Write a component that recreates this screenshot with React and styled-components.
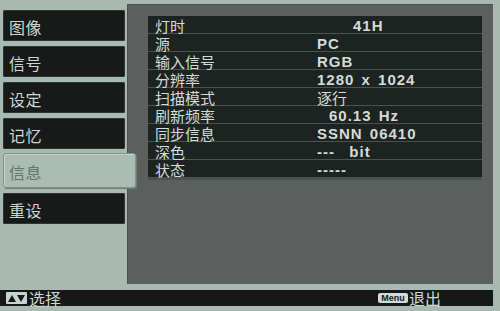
import React from "react";
import styled, { createGlobalStyle } from "styled-components";

const Global = createGlobalStyle`
  html, body { margin: 0; padding: 0; }
  body { background: #a7b9b1; }
  #root { width: 500px; height: 311px; overflow: hidden; }
`;

const cjk = `"Noto Sans CJK SC", "Noto Sans", sans-serif`;

const Screen = styled.div`
  width: 500px;
  height: 311px;
  background: #a7b9b1;
  display: flex;
  flex-direction: column;
  font-family: ${cjk};
`;

const Main = styled.div`
  display: flex;
  padding: 4px 7px 0 3px;
  height: 280px;
`;

const Sidebar = styled.div`
  width: 124px;
  display: flex;
  flex-direction: column;
  gap: 5px;
  padding-top: 6px;
  position: relative;
  z-index: 1;
`;

const MenuItem = styled.div`
  box-sizing: border-box;
  height: ${(p) => (p.$active ? 35 : 31)}px;
  width: ${(p) => (p.$active ? 133 : 122)}px;
  margin-top: ${(p) => (p.$active ? -1 : 0)}px;
  background: ${(p) => (p.$active ? "#aabdb4" : "#171a18")};
  border: 1px solid ${(p) => (p.$active ? "#84938c" : "#2f3532")};
  border-radius: ${(p) => (p.$active ? 3 : 1)}px;
  box-shadow: ${(p) =>
    p.$active ? "1px 1px 0 #6f7d77, inset 1px 1px 0 #c2d2ca" : "none"};
  color: ${(p) => (p.$active ? "#66746e" : "#cdd8d2")};
  font-size: 16px;
  display: flex;
  align-items: center;
  padding: 2px 0 0 5px;
  letter-spacing: 0.5px;
`;

const Panel = styled.div`
  flex: 1;
  margin-left: 0;
  background: #5b5f5d;
  padding: 12px 11px 0 21px;
  box-shadow: inset 1px 1px 0 #4a4e4c;
`;

const Table = styled.div`
  display: flex;
  flex-direction: column;
  gap: 1px;
  background: #4b5350;
  padding-bottom: 3px;
  padding-top: 0;
`;

const Row = styled.div`
  display: grid;
  grid-template-columns: 169px 1fr;
  height: 17px;
  background: #1d2321;
  align-items: center;
  color: #d4dcd8;
`;

const Label = styled.div`
  font-family: ${cjk};
  font-size: 15px;
  padding-left: 7px;
  line-height: 17px;
  padding-top: 1px;
`;

const Value = styled.div`
  font-family: "Liberation Sans", ${cjk};
  font-weight: bold;
  font-size: 15px;
  letter-spacing: 1px;
  word-spacing: 2px;
  line-height: 17px;
  padding-left: ${(p) => p.$indent || 0}px;
  padding-top: 1px;
  white-space: pre;
`;

const CjkValue = styled(Value)`
  font-family: ${cjk};
  font-weight: normal;
  letter-spacing: 0;
`;

const Footer = styled.div`
  margin-top: 6px;
  height: 16px;
  margin-right: 7px;
  background: #151816;
  display: flex;
  align-items: center;
  color: #cdd8d2;
  font-size: 16px;
`;

const ArrowKey = styled.span`
  display: inline-flex;
  align-items: center;
  justify-content: center;
  gap: 1px;
  width: 21px;
  height: 12px;
  margin-left: 6px;
  margin-right: 2px;
  background: #c9d4cf;
  border-radius: 1px;
`;

const MenuKey = styled.span`
  display: inline-flex;
  align-items: center;
  justify-content: center;
  height: 10px;
  width: 30px;
  margin-left: auto;
  margin-right: 1px;
  background: #d2dcd7;
  color: #151816;
  border-radius: 2px;
  font-family: "Liberation Sans", sans-serif;
  font-size: 9px;
  font-weight: bold;
`;

const FootText = styled.span`
  line-height: 16px;
`;

const ExitText = styled(FootText)`
  margin-right: 52px;
`;

const rows = [
  ["灯时", "41H", 36, false],
  ["源", "PC", 0, false],
  ["输入信号", "RGB", 0, false],
  ["分辨率", "1280 x 1024", 0, false],
  ["扫描模式", "逐行", 0, true],
  ["刷新频率", "60.13 Hz", 12, false],
  ["同步信息", "SSNN 06410", 0, false],
  ["深色", "---  bit", 0, false],
  ["状态", "-----", 0, false],
];

const menu = ["图像", "信号", "设定", "记忆", "信息", "重设"];

export default function App() {
  return (
    <Screen>
      <Global />
      <Main>
        <Sidebar>
          {menu.map((m) => (
            <MenuItem key={m} $active={m === "信息"}>
              {m}
            </MenuItem>
          ))}
        </Sidebar>
        <Panel>
          <Table>
            {rows.map(([l, v, ind, isCjk]) => (
              <Row key={l}>
                <Label>{l}</Label>
                {isCjk ? (
                  <CjkValue $indent={ind}>{v}</CjkValue>
                ) : (
                  <Value $indent={ind}>{v}</Value>
                )}
              </Row>
            ))}
          </Table>
        </Panel>
      </Main>
      <Footer>
        <ArrowKey>
          <svg width="19" height="9" viewBox="0 0 19 9">
            <polygon points="1,8 5,1 9,8" fill="#151816" />
            <polygon points="10,1 18,1 14,8" fill="#151816" />
          </svg>
        </ArrowKey>
        <FootText>选择</FootText>
        <MenuKey>Menu</MenuKey>
        <ExitText>退出</ExitText>
      </Footer>
    </Screen>
  );
}
